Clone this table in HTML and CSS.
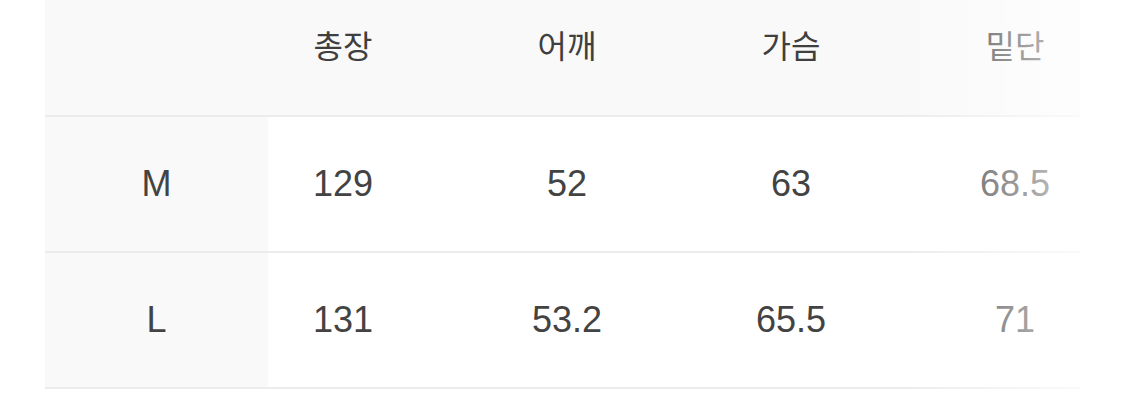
FILE: index.html
```html
<!DOCTYPE html>
<html lang="ko">
<head>
<meta charset="utf-8">
<title>Size chart</title>
<link rel="stylesheet" href="styles.css">
</head>
<body>
<div class="sheet">
  <div class="table">
    <div class="row head">
      <div class="label"></div>
      <div class="cols">
        <div class="cell">총장</div>
        <div class="cell">어깨</div>
        <div class="cell">가슴</div>
        <div class="cell">밑단</div>
      </div>
    </div>
    <div class="row">
      <div class="label">M</div>
      <div class="cols">
        <div class="cell">129</div>
        <div class="cell">52</div>
        <div class="cell">63</div>
        <div class="cell">68.5</div>
      </div>
    </div>
    <div class="row">
      <div class="label">L</div>
      <div class="cols">
        <div class="cell">131</div>
        <div class="cell">53.2</div>
        <div class="cell">65.5</div>
        <div class="cell">71</div>
      </div>
    </div>
  </div>
  <div class="fade"></div>
</div>
</body>
</html>
```

FILE: styles.css
```css
html, body {
  margin: 0;
  padding: 0;
  background: #ffffff;
}

body {
  font-family: "Liberation Sans", "Noto Sans CJK KR", sans-serif;
  color: #434343;
}

.sheet {
  position: relative;
  margin-left: 45px;
  width: 1035px;
  overflow: hidden;
}

.table {
  display: flex;
  flex-direction: column;
}

.row {
  display: flex;
  height: 134px;
  border-bottom: 2px solid #ececec;
  font-size: 36px;
}

.row.head {
  height: 115px;
  background: #f9f9f9;
  font-family: "Noto Sans CJK KR", "Liberation Sans", sans-serif;
  font-size: 32px;
  color: #3f3f3f;
}

.label {
  position: relative;
  z-index: 1;
  flex: 0 0 223px;
  display: flex;
  align-items: center;
  justify-content: center;
  background: #f9f9f9;
}

.cols {
  display: flex;
  margin-left: -37px;
}

.cell {
  flex: 0 0 224px;
  display: flex;
  align-items: center;
  justify-content: center;
}

.head .cell {
  align-items: flex-start;
  padding-top: 25px;
  line-height: 1.2;
}

.fade {
  position: absolute;
  top: 0;
  right: 0;
  bottom: 0;
  width: 180px;
  z-index: 2;
  background: linear-gradient(to right, rgba(255,255,255,0), rgba(255,255,255,0.72));
  pointer-events: none;
}
```
